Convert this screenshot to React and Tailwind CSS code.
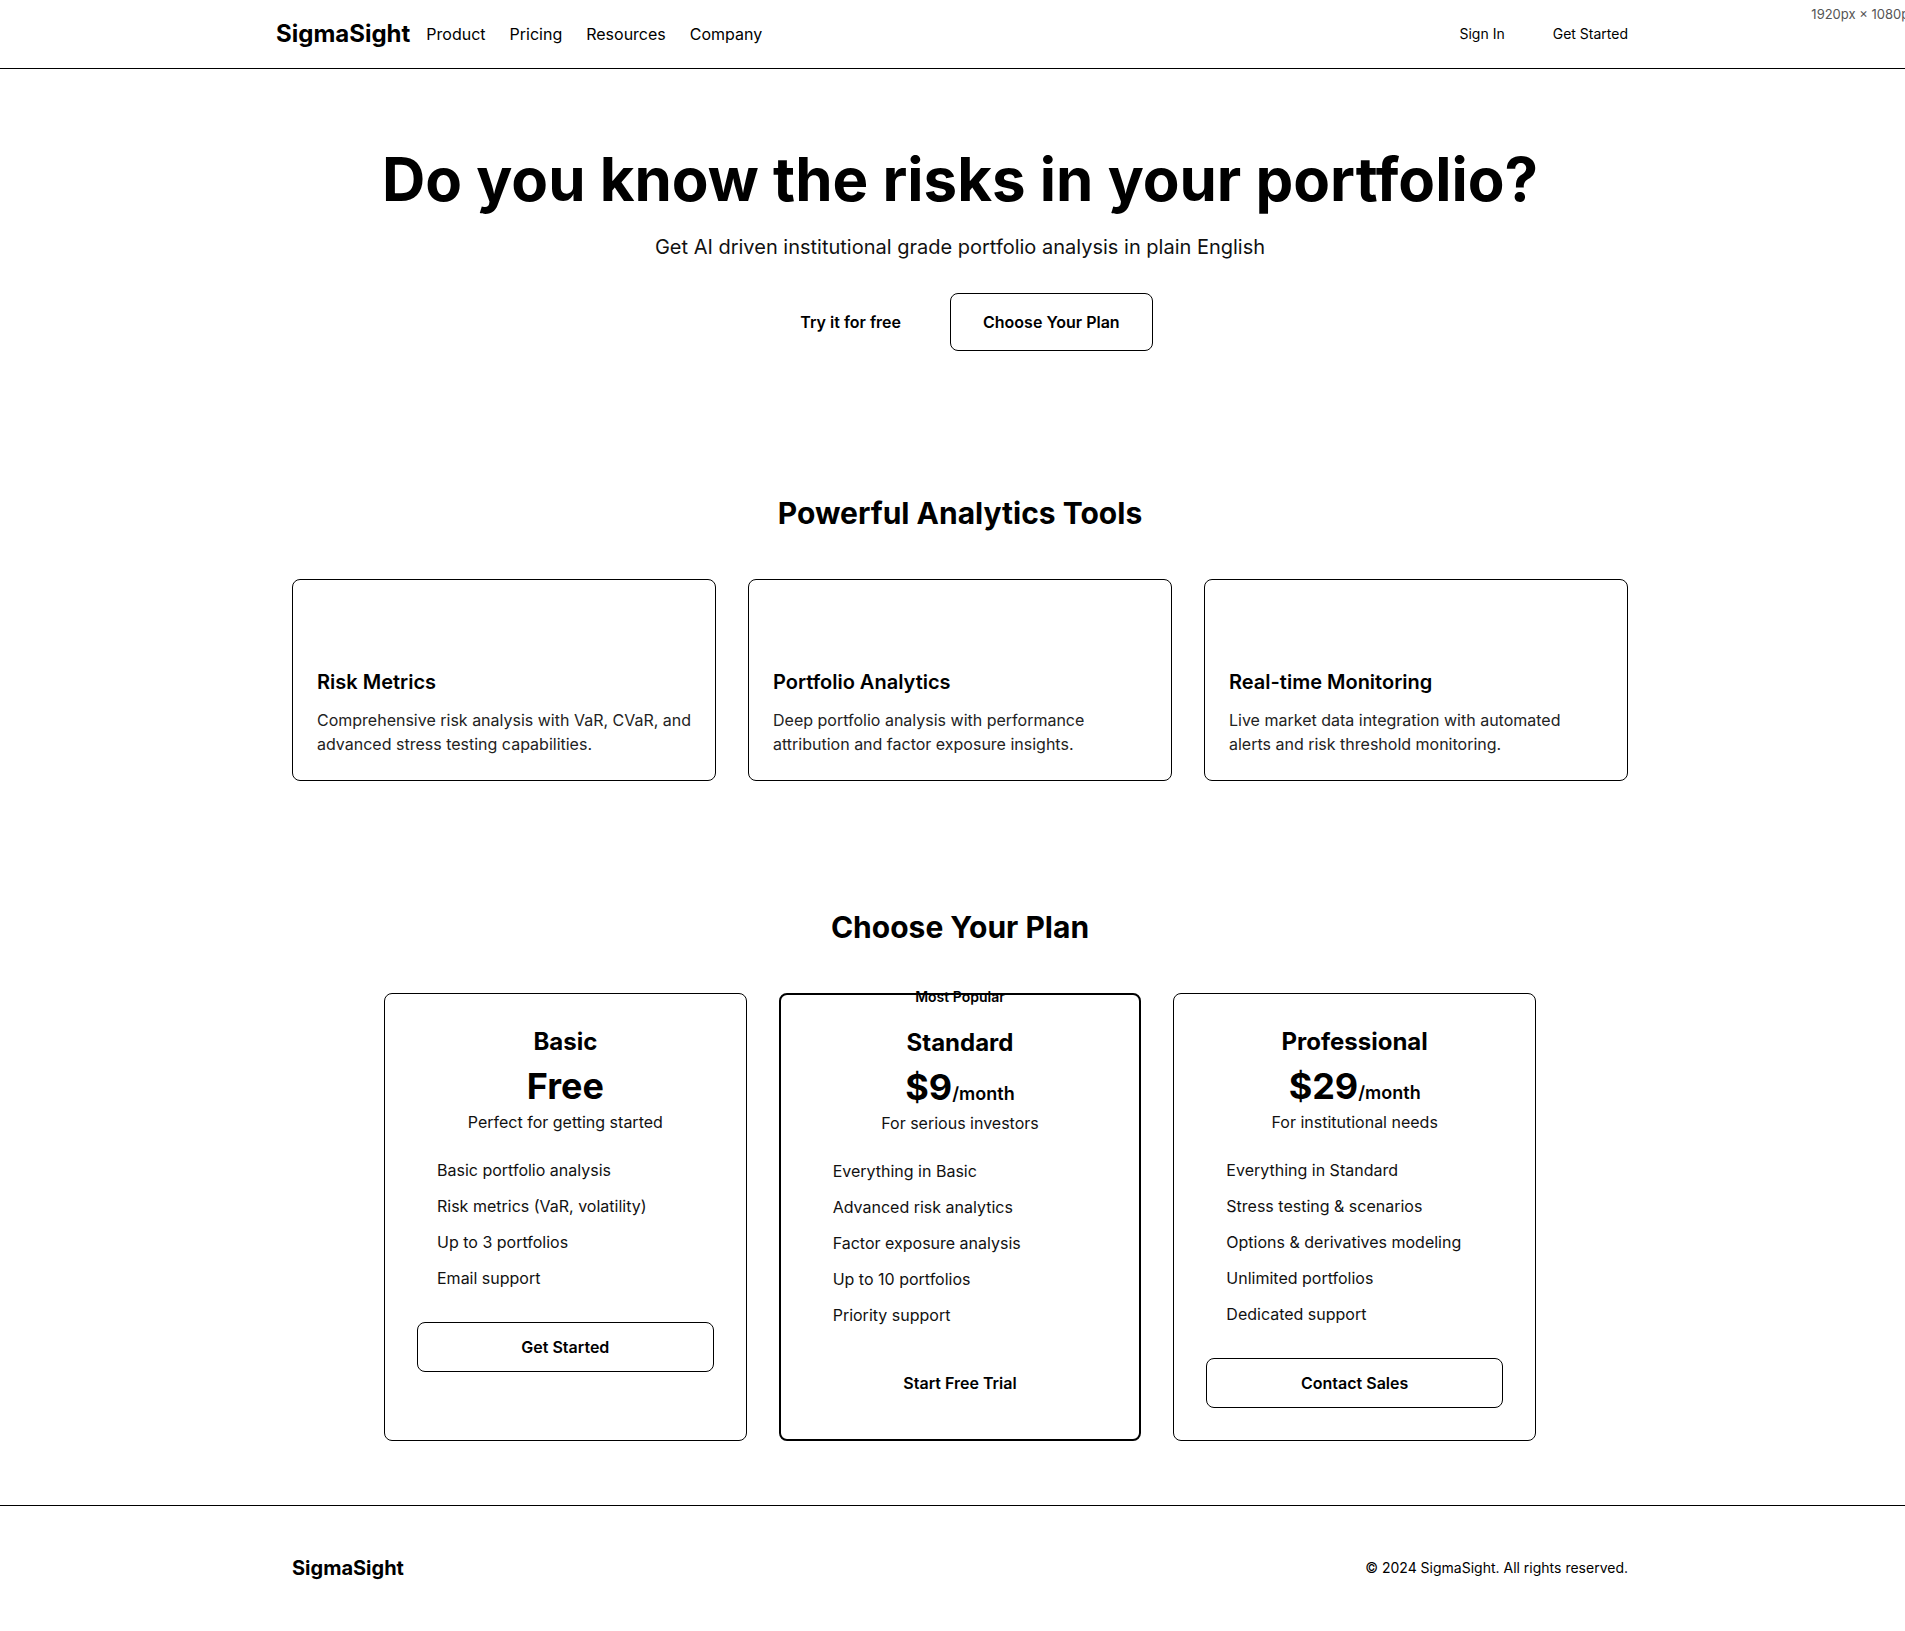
import React from "react";

const features = [
    {
        title: "Risk Metrics",
        text: "Comprehensive risk analysis with VaR, CVaR, and advanced stress testing capabilities.",
    },
    {
        title: "Portfolio Analytics",
        text: "Deep portfolio analysis with performance attribution and factor exposure insights.",
    },
    {
        title: "Real-time Monitoring",
        text: "Live market data integration with automated alerts and risk threshold monitoring.",
    },
];

const plans = [
    {
        name: "Basic",
        price: "Free",
        period: "",
        blurb: "Perfect for getting started",
        items: ["Basic portfolio analysis", "Risk metrics (VaR, volatility)", "Up to 3 portfolios", "Email support"],
        cta: "Get Started",
        popular: false,
    },
    {
        name: "Standard",
        price: "$9",
        period: "/month",
        blurb: "For serious investors",
        items: ["Everything in Basic", "Advanced risk analytics", "Factor exposure analysis", "Up to 10 portfolios", "Priority support"],
        cta: "Start Free Trial",
        popular: true,
    },
    {
        name: "Professional",
        price: "$29",
        period: "/month",
        blurb: "For institutional needs",
        items: ["Everything in Standard", "Stress testing & scenarios", "Options & derivatives modeling", "Unlimited portfolios", "Dedicated support"],
        cta: "Contact Sales",
        popular: false,
    },
];

const Header = () => (
    <header className="h-[69px] border-b border-black">
        <div className="mx-auto flex h-full max-w-[1400px] items-center justify-between px-4">
            <div className="flex items-center gap-4">
                <span className="text-2xl font-bold">SigmaSight</span>
                <nav className="flex items-center gap-6 text-base">
                    <a>Product</a>
                    <a>Pricing</a>
                    <a>Resources</a>
                    <a>Company</a>
                </nav>
            </div>
            <div className="flex items-center gap-4 text-sm">
                <button className="px-4 py-2">Sign In</button>
                <button className="px-4 py-2">Get Started</button>
            </div>
        </div>
    </header>
);

const PlanCard = ({ plan }) => (
    <div
        className={`relative flex flex-col rounded-lg p-8 ${
            plan.popular ? "border-2 border-black" : "border border-black"
        }`}
    >
        {/* badge lost its background, text sits on the border */}
        {plan.popular && (
            <span className="absolute -top-2 left-1/2 -translate-x-1/2 text-sm font-semibold whitespace-nowrap">
                Most Popular
            </span>
        )}
        <div className="text-center">
            <h3 className="mb-2 text-2xl font-bold">{plan.name}</h3>
            <div className="h-10 text-4xl leading-10 font-bold">
                {plan.price}
                {plan.period && <span className="text-lg leading-none font-semibold">{plan.period}</span>}
            </div>
            <p className="mt-1 text-base text-[#111]">{plan.blurb}</p>
        </div>
        <ul className="mt-6 space-y-3 pl-5 text-base text-[#111]">
            {plan.items.map((item) => (
                <li key={item}>{item}</li>
            ))}
        </ul>
        <button
            className={`mt-8 w-full rounded-lg py-3 text-base font-semibold ${
                plan.popular ? "" : "border border-black"
            }`}
        >
            {plan.cta}
        </button>
    </div>
);

export default function App() {
    return (
        <div className="w-full overflow-hidden bg-white">
            <div className="relative w-[1920px] font-['Inter',sans-serif] text-black">
                <span className="absolute right-1 top-[5px] text-[13px] text-[#555]">1920px × 1080px</span>

                <Header />

                {/* HERO */}
                <section className="pb-20 pt-20 text-center">
                    <h1 className="text-6xl font-bold">Do you know the risks in your portfolio?</h1>
                    <p className="mt-6 text-xl text-[#111]">Get AI driven institutional grade portfolio analysis in plain English</p>
                    <div className="mt-8 flex items-center justify-center gap-4">
                        <button className="border border-transparent px-8 py-4 text-base font-semibold">Try it for free</button>
                        <button className="rounded-lg border border-black px-8 py-4 text-base font-semibold">
                            Choose Your Plan
                        </button>
                    </div>
                </section>

                {/* FEATURES */}
                <section className="pb-16 pt-16">
                    <div className="mx-auto max-w-[1400px] px-8">
                        <h2 className="mb-12 text-center text-3xl font-bold">Powerful Analytics Tools</h2>
                        <div className="grid grid-cols-3 gap-8">
                            {features.map((f) => (
                                <div key={f.title} className="rounded-lg border border-black p-6">
                                    <div className="mb-4 h-12 w-12" />
                                    <h3 className="mb-3 text-xl font-semibold">{f.title}</h3>
                                    <p className="mr-[-2px] text-base text-[#222]">{f.text}</p>
                                </div>
                            ))}
                        </div>
                    </div>
                </section>

                {/* PRICING */}
                <section className="pb-16 pt-16">
                    <h2 className="mb-12 text-center text-3xl font-bold">Choose Your Plan</h2>
                    <div className="mx-auto grid max-w-6xl grid-cols-3 gap-8">
                        {plans.map((p) => (
                            <PlanCard key={p.name} plan={p} />
                        ))}
                    </div>
                </section>

                {/* FOOTER */}
                <footer className="border-t border-black py-12">
                    <div className="mx-auto flex max-w-[1400px] items-center justify-between px-8">
                        <span className="text-xl font-bold">SigmaSight</span>
                        <span className="text-sm">© 2024 SigmaSight. All rights reserved.</span>
                    </div>
                </footer>
            </div>
        </div>
    );
}
